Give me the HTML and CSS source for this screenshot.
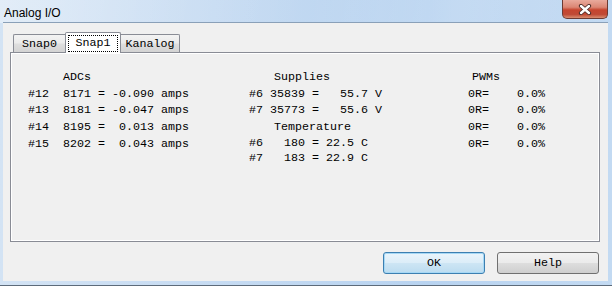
FILE: index.html
```html
<!DOCTYPE html>
<html lang="en">
<head>
  <meta charset="UTF-8">
  <title>Analog I/O</title>
  <link rel="stylesheet" href="styles.css">
</head>
<body>
<div class="window">
  <div class="titlebar">
    <span class="title">Analog I/O</span>
    <div class="close">
      <svg width="14" height="11" viewBox="0 0 14 11">
        <path d="M3 2 L11 9 M11 2 L3 9" stroke="#4a2a26" stroke-width="4.2" stroke-linecap="round"/>
        <path d="M3 2 L11 9 M11 2 L3 9" stroke="#ffffff" stroke-width="2.4" stroke-linecap="round"/>
      </svg>
    </div>
  </div>

  <div class="client">
    <div class="tabs">
      <div class="tab tab-first">Snap0</div>
      <div class="tab tab-selected"><span class="focus">Snap1</span></div>
      <div class="tab tab-last">Kanalog</div>
    </div>

    <div class="panel">
      <div class="col col-adc">
        <div class="head">ADCs</div>
        <div class="row">#12  8171 = -0.090 amps</div>
        <div class="row">#13  8181 = -0.047 amps</div>
        <div class="row">#14  8195 =  0.013 amps</div>
        <div class="row">#15  8202 =  0.043 amps</div>
      </div>
      <div class="col col-sup">
        <div class="head">Supplies</div>
        <div class="row">#6 35839 =   55.7 V</div>
        <div class="row">#7 35773 =   55.6 V</div>
        <div class="head">Temperature</div>
        <div class="row temp">#6   180 = 22.5 C</div>
        <div class="row temp">#7   183 = 22.9 C</div>
      </div>
      <div class="col col-pwm">
        <div class="head">PWMs</div>
        <div class="row">0R=    0.0%</div>
        <div class="row">0R=    0.0%</div>
        <div class="row">0R=    0.0%</div>
        <div class="row">0R=    0.0%</div>
      </div>
    </div>

    <div class="actions">
      <button class="btn btn-default">OK</button>
      <button class="btn">Help</button>
    </div>
  </div>
</div>
</body>
</html>
```

FILE: styles.css
```css
body {
  margin: 0;
  background: #ffffff;
}

.window {
  width: 612px;
  height: 286px;
  box-sizing: border-box;
  display: flex;
  flex-direction: column;
  background: linear-gradient(to right, #d3e3f4, #c6dbf2 35%, #b8d3f0 70%, #c3daf2);
  border-bottom: 1px solid #5d6b7a;
  padding: 0 4px 4px 3px;
  font-family: 'Liberation Mono', 'Courier New', monospace;
  font-size: 11.67px;
  color: #000;
}

.titlebar {
  height: 23px;
  display: flex;
  justify-content: space-between;
  align-items: flex-start;
  margin-left: -3px;
  margin-right: -4px;
  padding: 0 4px 0 4px;
  background: linear-gradient(100deg, rgba(255,255,255,0.35) 0%, rgba(255,255,255,0.1) 30%, rgba(255,255,255,0) 50%, rgba(255,255,255,0.15) 75%, rgba(255,255,255,0) 100%);
}

.title {
  font-family: 'Liberation Sans', Arial, sans-serif;
  font-size: 12px;
  line-height: 26px;
  color: #000;
}

.close {
  width: 46px;
  height: 19px;
  box-sizing: border-box;
  border: 1px solid #6c3b33;
  border-top: none;
  border-radius: 0 0 5px 5px;
  background: linear-gradient(#e9aa9c, #db8674 40%, #c6452f 55%, #c04a35 80%, #d98d70);
  display: flex;
  align-items: center;
  justify-content: center;
}

.client {
  flex: 1;
  display: flex;
  flex-direction: column;
  background: #f0f0f0;
  padding: 9px 8px 7px 7px;
  border-top: 1px solid #8aa0b8;
  margin-top: -1px;
}

.tabs {
  display: flex;
  align-items: flex-end;
  height: 20px;
  margin-left: 3px;
  position: relative;
  z-index: 1;
}

.tab {
  box-sizing: border-box;
  height: 18px;
  line-height: 19px;
  border: 1px solid #898c95;
  border-bottom: none;
  background: linear-gradient(#f3f3f3, #ebebeb 45%, #dedede 55%, #d3d3d3);
  text-align: center;
}

.tab-first {
  width: 52px;
  border-right: none;
  border-radius: 2px 0 0 0;
}

.tab-last {
  width: 59px;
  border-left: none;
  border-radius: 0 2px 0 0;
}

.tab-selected {
  width: 56px;
  height: 21px;
  margin-bottom: -1px;
  background: #ffffff;
  border-radius: 2px 2px 0 0;
  padding: 2px 2px 0;
  line-height: 14px;
}

.focus {
  display: block;
  height: 15px;
  border: 1px dotted #000;
  line-height: 14px;
}

.panel {
  flex: 1;
  display: grid;
  grid-template-columns: 221px 219px auto;
  align-content: start;
  align-items: start;
  border: 1px solid #898c95;
  box-shadow: inset 0 0 0 1px #ffffff;
  background: #f0f0f0;
  padding: 16px 0 0 17px;
}

.head,
.row {
  white-space: pre;
  line-height: 16.67px;
}

.col-adc .head {
  padding-left: 35px;
}

.col-sup .head {
  padding-left: 25px;
}

.col-pwm .head {
  padding-left: 4px;
}

.temp {
  line-height: 15.5px;
}

.actions {
  display: flex;
  justify-content: flex-end;
  gap: 12px;
  margin-top: 10px;
  padding-right: 1px;
}

.btn {
  width: 102px;
  height: 22px;
  border: 1px solid #707070;
  border-radius: 3px;
  background: linear-gradient(#f2f2f2, #ebebeb 48%, #dddddd 52%, #cfcfcf);
  font-family: 'Liberation Mono', 'Courier New', monospace;
  font-size: 11.67px;
  color: #000;
  padding: 0;
}

.btn-default {
  border-color: #3c7fb1;
  background: linear-gradient(#eaf5fc, #dcedf8 48%, #cde5f4 52%, #bcdcf0);
  box-shadow: inset 0 0 0 1px #a6d8f5;
}
```
